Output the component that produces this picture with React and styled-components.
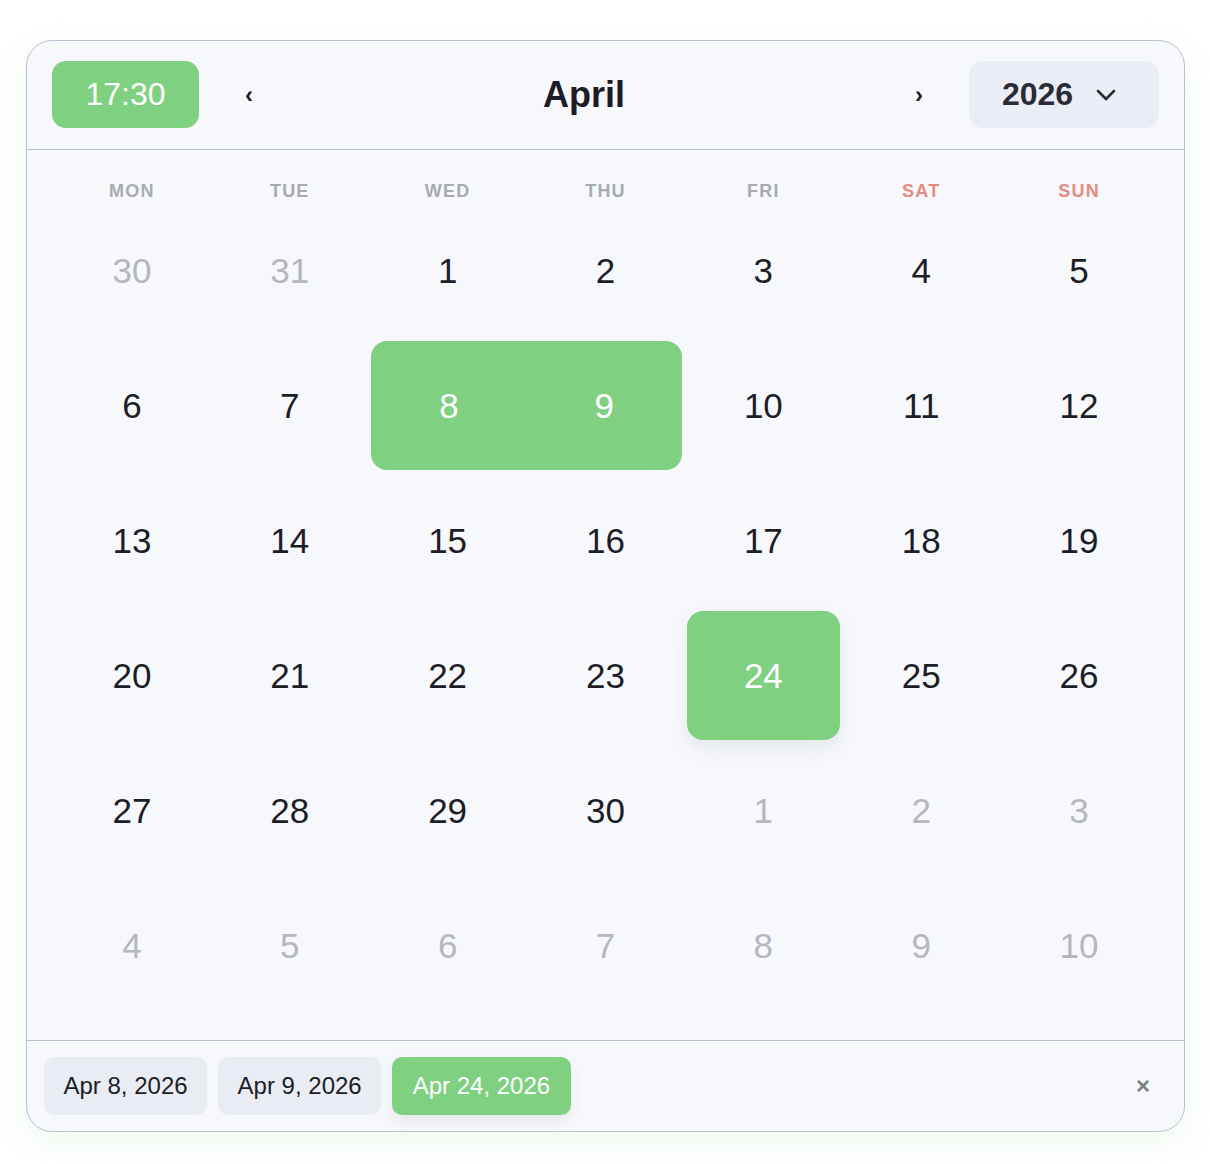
import React from "react";
import styled, { createGlobalStyle, css } from "styled-components";

const GlobalStyle = createGlobalStyle`
  body {
    margin: 0;
    background: #ffffff;
    font-family: "Liberation Sans", Arial, sans-serif;
  }
`;

const Page = styled.div`
  padding: 40px 0 30px 26px;
`;

const Card = styled.div`
  width: 1159px;
  box-sizing: border-box;
  background: #f7f8fc;
  border: 1.5px solid #b9c0d1;
  border-radius: 26px;
  box-shadow: 0 12px 34px rgba(128, 208, 129, 0.12);
  overflow: hidden;
`;

const Header = styled.header`
  display: flex;
  align-items: center;
  gap: 30px;
  padding: 20px 25px 21px 25px;
  border-bottom: 1.5px solid #b9c0d1;
`;

const TimeButton = styled.button`
  width: 147px;
  height: 67px;
  border: none;
  border-radius: 14px;
  background: #80d081;
  color: #ffffff;
  font-family: inherit;
  font-size: 32px;
  cursor: pointer;
`;

const NavButton = styled.button`
  width: 40px;
  height: 40px;
  border: none;
  background: transparent;
  color: #1c1d26;
  font-family: inherit;
  font-size: 24px;
  font-weight: 700;
  cursor: pointer;
  padding: 0;
`;

const Title = styled.h1`
  flex: 1;
  margin: 0;
  text-align: center;
  font-size: 36px;
  font-weight: 700;
  color: #1c1d26;
`;

const YearSelect = styled.button`
  width: 190px;
  height: 67px;
  border: none;
  border-radius: 14px;
  background: #eaedf5;
  color: #2a2b36;
  font-family: inherit;
  font-size: 32px;
  font-weight: 700;
  display: flex;
  align-items: center;
  justify-content: center;
  gap: 23px;
  padding: 0 10px 0 0;
  cursor: pointer;
`;

const Body = styled.div`
  padding: 31px 26px 30px;
`;

const Weekdays = styled.div`
  display: grid;
  grid-template-columns: repeat(7, 1fr);
  margin-bottom: 5px;
`;

const Weekday = styled.div`
  text-align: center;
  line-height: 20px;
  font-size: 18px;
  font-weight: 700;
  letter-spacing: 1.2px;
  color: ${(p) => (p.$weekend ? "#e48b84" : "#a8aab2")};
`;

const Grid = styled.div`
  display: grid;
  grid-template-columns: repeat(7, 1fr);
  grid-auto-rows: 129px;
  row-gap: 6px;
`;

const Cell = styled.div`
  display: flex;
  padding: ${(p) =>
    p.$range === "start"
      ? "0 0 0 2.5px"
      : p.$range === "end"
      ? "0 2.5px 0 0"
      : "0 2.5px"};
`;

const Day = styled.div`
  flex: 1;
  display: flex;
  align-items: center;
  justify-content: center;
  font-size: 35px;
  color: ${(p) => (p.$muted ? "#b5b7bd" : "#1c1d26")};
  ${(p) =>
    p.$range &&
    css`
      background: #80d081;
      color: #ffffff;
      border-radius: ${p.$range === "start"
        ? "16px 0 0 16px"
        : p.$range === "end"
        ? "0 16px 16px 0"
        : "16px"};
    `}
  ${(p) =>
    p.$range === "single" &&
    css`
      box-shadow: 0 8px 18px rgba(120, 140, 130, 0.14);
    `}
`;

const Footer = styled.footer`
  display: flex;
  align-items: center;
  gap: 11px;
  padding: 16px 25px 16px 17px;
  border-top: 1.5px solid #b9c0d1;
`;

const Chip = styled.span`
  height: 58px;
  display: inline-flex;
  align-items: center;
  padding: 0 ${(p) => (p.$active ? "20.5px" : "19.5px")};
  border-radius: 10px;
  font-size: 24px;
  background: ${(p) => (p.$active ? "#80d081" : "#e9ecf3")};
  color: ${(p) => (p.$active ? "#ffffff" : "#1c1d26")};
  box-shadow: ${(p) => (p.$active ? "0 6px 14px rgba(120,140,130,0.14)" : "none")};
`;

const ClearButton = styled.button`
  margin-left: auto;
  width: 32px;
  height: 32px;
  border: none;
  background: transparent;
  color: #7d7f88;
  font-family: inherit;
  font-size: 24px;
  font-weight: 700;
  cursor: pointer;
  padding: 0;
`;

const weekdays = ["MON", "TUE", "WED", "THU", "FRI", "SAT", "SUN"];

const days = [];
[30, 31].forEach((d) => days.push({ d, muted: true }));
for (let d = 1; d <= 30; d++) {
  let range;
  if (d === 8) range = "start";
  if (d === 9) range = "end";
  if (d === 24) range = "single";
  days.push({ d, range });
}
for (let d = 1; d <= 10; d++) days.push({ d, muted: true });

function Chevron() {
  return (
    <svg width="20" height="12" viewBox="0 0 20 12" fill="none">
      <path
        d="M2 2 L10 10 L18 2"
        stroke="#2a2b36"
        strokeWidth="2.6"
        strokeLinecap="round"
        strokeLinejoin="round"
      />
    </svg>
  );
}

export default function App() {
  return (
    <>
      <GlobalStyle />
      <Page>
        <Card>
          <Header>
            <TimeButton>17:30</TimeButton>
            <NavButton>‹</NavButton>
            <Title>April</Title>
            <NavButton>›</NavButton>
            <YearSelect>
              2026
              <Chevron />
            </YearSelect>
          </Header>
          <Body>
            <Weekdays>
              {weekdays.map((w, i) => (
                <Weekday key={w} $weekend={i > 4}>
                  {w}
                </Weekday>
              ))}
            </Weekdays>
            <Grid>
              {days.map((day, i) => (
                <Cell key={i} $range={day.range}>
                  <Day $muted={day.muted} $range={day.range}>
                    {day.d}
                  </Day>
                </Cell>
              ))}
            </Grid>
          </Body>
          <Footer>
            <Chip>Apr 8, 2026</Chip>
            <Chip>Apr 9, 2026</Chip>
            <Chip $active>Apr 24, 2026</Chip>
            <ClearButton>×</ClearButton>
          </Footer>
        </Card>
      </Page>
    </>
  );
}
